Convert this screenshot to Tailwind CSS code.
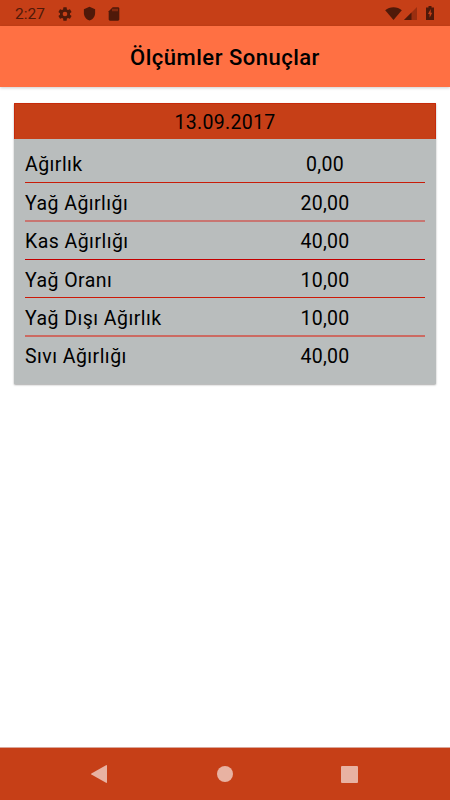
<!DOCTYPE html>
<html lang="tr">
<head>
  <meta charset="UTF-8" />
  <meta name="viewport" content="width=device-width, initial-scale=1.0"/>
  <title>Ölçümler Sonuçlar</title>
  <script src="https://cdn.jsdelivr.net/npm/@tailwindcss/browser@4"></script>
</head>
<body class="bg-white font-[Roboto,sans-serif] text-black">
  <div class="w-[450px] h-[800px] flex flex-col overflow-hidden">

    <!-- Status bar -->
    <div class="h-[26px] shrink-0 bg-[#c63f17] flex items-center pl-[15px] pr-4 text-[#4f1909]">
      <span class="w-[43px] text-[15.5px] leading-[26px] pt-[2px]">2:27</span>
      <svg class="size-4 mt-px -ml-px" viewBox="0 0 24 24" fill="currentColor"><path d="M19.43 12.98c.04-.32.07-.64.07-.98s-.03-.66-.07-.98l2.11-1.65c.19-.15.24-.42.12-.64l-2-3.46c-.12-.22-.39-.3-.61-.22l-2.49 1c-.52-.4-1.08-.73-1.69-.98l-.38-2.65C14.46 2.18 14.25 2 14 2h-4c-.25 0-.46.18-.49.42l-.38 2.65c-.61.25-1.17.59-1.69.98l-2.49-1c-.23-.09-.49 0-.61.22l-2 3.46c-.13.22-.07.49.12.64l2.11 1.65c-.04.32-.07.65-.07.98s.03.66.07.98l-2.11 1.65c-.19.15-.24.42-.12.64l2 3.46c.12.22.39.3.61.22l2.49-1c.52.4 1.08.73 1.69.98l.38 2.65c.03.24.24.42.49.42h4c.25 0 .46-.18.49-.42l.38-2.65c.61-.25 1.17-.59 1.69-.98l2.49 1c.23.09.49 0 .61-.22l2-3.46c.12-.22.07-.49-.12-.64l-2.11-1.65zM12 15.5a3.5 3.5 0 1 1 0-7 3.5 3.5 0 0 1 0 7z"/></svg>
      <svg class="size-[15px] mt-px ml-[9px]" viewBox="0 0 24 24" fill="currentColor"><path d="M12 1L3 5v6c0 5.55 3.84 10.74 9 12 5.16-1.26 9-6.45 9-12V5l-9-4z"/></svg>
      <svg class="size-4 mt-px ml-[8.5px]" viewBox="0 0 24 24"><path d="M18 2h-8L4.020 8 4 20c0 1.100.9 2 2 2h12c1.100 0 2-.9 2-2V4c0-1.100-.9-2-2-2z" fill="currentColor"/><path d="M9.500 4h2v4h-2zM12.500 4h2v4h-2zM15.500 4h2v4h-2z" fill="#a13313"/></svg>
      <div class="grow"></div>
      <svg class="w-[17px] h-[13px]" viewBox="0 0 17 13" fill="currentColor"><path d="M.2 3.300C2.500 1.400 5.300.3 8.500.3s6 1.100 8.300 3L8.500 13z"/></svg>
      <svg class="w-[13px] h-[13px] ml-[2px]" viewBox="0 0 13 13"><path d="M0 13L13 0v13z" fill="#9a2e10"/><path d="M0 13L7.500 5.500V13z" fill="currentColor"/></svg>
      <svg class="w-[8px] h-[14px] ml-[9px]" viewBox="0 0 8 14"><path d="M2.500 0h3v1.400H8V14H0V1.400h2.500z" fill="currentColor"/><path d="M4.700 3L2 8h1.600v3.700L6.200 6.800H4.700z" fill="#c63f17"/></svg>
    </div>

    <!-- App bar -->
    <div class="relative h-[61px] shrink-0 bg-[#ff7043] flex items-center justify-center shadow-[0_1px_3px_rgba(0,0,0,0.2)]">
      <h1 class="text-[22px] leading-[26px] font-medium tracking-[0.5px] pt-[2px]">Ölçümler Sonuçlar</h1>
    </div>

    <!-- Results -->
    <div class="grow px-[14px] pt-4">
      <div class="h-[281px] rounded-[1px] bg-[#b9bdbd] shadow-[0_1px_2px_rgba(0,0,0,0.35)] text-[19.5px] leading-6 tracking-[0.3px]">
        <div class="h-9 bg-[#c63f17] border border-b-0 border-[#c62a0a] text-center pt-[7px] rounded-t-[1px]">13.09.2017</div>
        <div class="px-[11px] pt-[5px]">
          <div class="h-[38px] flex items-center">
            <span class="w-1/2 pt-1 tracking-[0.45px]">Ağırlık</span><span class="w-1/2 text-center pt-1">0,00</span>
          </div>
          <div class="h-px bg-[#c81c08]"></div>
          <div class="h-[37px] flex items-center">
            <span class="w-1/2 pt-1 tracking-[0.45px]">Yağ Ağırlığı</span><span class="w-1/2 text-center pt-1">20,00</span>
          </div>
          <div class="h-[2px] bg-[#c87672]"></div>
          <div class="h-[37px] flex items-center">
            <span class="w-1/2 pt-[3px] tracking-[0.45px]">Kas Ağırlığı</span><span class="w-1/2 text-center pt-[3px]">40,00</span>
          </div>
          <div class="h-px bg-[#c40000]"></div>
          <div class="h-[37px] flex items-center">
            <span class="w-1/2 pt-1 tracking-[0.45px]">Yağ Oranı</span><span class="w-1/2 text-center pt-1">10,00</span>
          </div>
          <div class="h-px bg-[#cb1a08]"></div>
          <div class="h-[37px] flex items-center">
            <span class="w-1/2 pt-1 tracking-[0.45px]">Yağ Dışı Ağırlık</span><span class="w-1/2 text-center pt-1">10,00</span>
          </div>
          <div class="h-[2px] bg-[#cc6a62]"></div>
          <div class="h-[37px] flex items-center">
            <span class="w-1/2 pt-[3px] tracking-[0.45px]">Sıvı Ağırlığı</span><span class="w-1/2 text-center pt-[3px]">40,00</span>
          </div>
        </div>
      </div>
    </div>

    <!-- Navigation bar -->
    <div class="h-[53px] shrink-0 bg-[#c63f17] border-t border-[#d9a79b] flex items-center justify-between pl-[91px] pr-[92px] text-[#e8b2a2]">
      <svg class="w-4 h-[18px]" viewBox="0 0 16 18" fill="currentColor"><path d="M15 .2Q16-.2 16 1v16q0 1.200-1 .8L.4 9.600Q-.2 9 .4 8.400z"/></svg>
      <svg class="size-4 ml-[1px]" viewBox="0 0 16 16" fill="currentColor"><circle cx="8" cy="8" r="8"/></svg>
      <svg class="size-[17px]" viewBox="0 0 17 17" fill="currentColor"><rect width="17" height="17" rx="1"/></svg>
    </div>
  </div>
</body>
</html>
